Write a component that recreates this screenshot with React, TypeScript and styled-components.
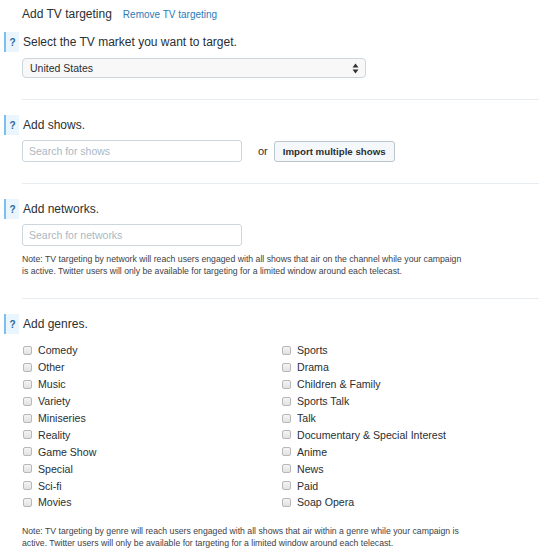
import styled, { createGlobalStyle } from "styled-components";

const GlobalStyle = createGlobalStyle`
  body {
    margin: 0;
    background: #fff;
    font-family: "Liberation Sans", Arial, sans-serif;
    color: #292f33;
  }
`;

const Page = styled.div`
  width: 548px;
  padding: 7px 0 0 0;
`;

const TitleRow = styled.div`
  display: flex;
  align-items: baseline;
  gap: 11px;
  padding-left: 22px;
  height: 17px;
`;

const Title = styled.span`
  font-size: 12px;
`;

const RemoveLink = styled.a`
  font-size: 10px;
  color: #2b7bb9;
  text-decoration: none;
  cursor: pointer;
`;

const Section = styled.section<{ $last?: boolean }>`
  margin-left: 22px;
  margin-right: 9px;
  padding: 8px 0 21px;
  border-bottom: ${(p) => (p.$last ? "none" : "1px solid #e6ecf0")};
  & + & {
    padding-top: 15px;
  }
`;

const Heading = styled.div`
  display: flex;
  align-items: center;
  height: 20px;
  margin-left: -18px;
  gap: 4px;
  font-size: 12px;
`;

const Help = styled.span`
  width: 13px;
  height: 20px;
  border-left: 2px solid #7cc0f2;
  background: #eaf5fd;
  color: #2b6a9b;
  font-size: 10px;
  font-weight: bold;
  display: flex;
  align-items: center;
  justify-content: center;
`;

const Select = styled.div`
  margin-top: 6px;
  width: 344px;
  height: 20px;
  box-sizing: border-box;
  border: 1px solid #ccd6dd;
  border-radius: 4px;
  background: #f8f8f8;
  display: flex;
  align-items: center;
  justify-content: space-between;
  padding: 0 6px 0 7px;
  font-size: 10.5px;
`;

const Row = styled.div`
  display: flex;
  align-items: center;
  margin-top: 5px;
`;

const Input = styled.input`
  width: 220px;
  height: 22px;
  box-sizing: border-box;
  border: 1px solid #ccd6dd;
  border-radius: 3px;
  padding: 0 6px;
  font-family: inherit;
  font-size: 10.5px;
  color: #292f33;
  &::placeholder {
    color: #aab8c2;
  }
`;

const Or = styled.span`
  font-size: 11px;
  margin: 0 6px 0 16px;
`;

const Button = styled.button`
  height: 21px;
  padding: 0 8px;
  border: 1px solid #bbc5cc;
  border-radius: 3px;
  background: #f5f8fa;
  font-family: inherit;
  font-size: 9.7px;
  font-weight: bold;
  color: #292f33;
`;

const Note = styled.p<{ $gap?: number }>`
  margin: ${(p) => p.$gap ?? 7}px 0 0;
  width: 442px;
  font-size: 8.7px;
  line-height: 12px;
  color: #3d4247;
`;

const Genres = styled.div`
  display: grid;
  grid-template-columns: 259px 1fr;
  grid-auto-flow: column;
  grid-template-rows: repeat(10, 16.9px);
  margin-top: 8px;
`;

const Genre = styled.label`
  display: flex;
  align-items: center;
  font-size: 10.6px;
  padding-left: 1px;
`;

const Box = styled.input.attrs({ type: "checkbox" })`
  appearance: none;
  width: 9px;
  height: 9px;
  margin: 0 6px 0 0;
  border: 1px solid #b8b8b8;
  border-radius: 2px;
  background: linear-gradient(#f4f4f4, #e2e2e2);
`;

const Arrows = () => (
  <svg width="7" height="11" viewBox="0 0 7 11">
    <path d="M3.5 0.5 L6.5 4.5 H0.5 Z" fill="#333" />
    <path d="M3.5 10.5 L6.5 6.5 H0.5 Z" fill="#333" />
  </svg>
);

const left = [
  "Comedy",
  "Other",
  "Music",
  "Variety",
  "Miniseries",
  "Reality",
  "Game Show",
  "Special",
  "Sci-fi",
  "Movies",
];
const right = [
  "Sports",
  "Drama",
  "Children & Family",
  "Sports Talk",
  "Talk",
  "Documentary & Special Interest",
  "Anime",
  "News",
  "Paid",
  "Soap Opera",
];

export default function App() {
  return (
    <Page>
      <GlobalStyle />
      <TitleRow>
        <Title>Add TV targeting</Title>
        <RemoveLink>Remove TV targeting</RemoveLink>
      </TitleRow>

      <Section>
        <Heading>
          <Help>?</Help>
          Select the TV market you want to target.
        </Heading>
        <Select>
          United States
          <Arrows />
        </Select>
      </Section>

      <Section>
        <Heading>
          <Help>?</Help>
          Add shows.
        </Heading>
        <Row>
          <Input placeholder="Search for shows" />
          <Or>or</Or>
          <Button>Import multiple shows</Button>
        </Row>
      </Section>

      <Section>
        <Heading>
          <Help>?</Help>
          Add networks.
        </Heading>
        <Row>
          <Input placeholder="Search for networks" />
        </Row>
        <Note>
          Note: TV targeting by network will reach users engaged with all shows
          that air on the channel while your campaign is active. Twitter users
          will only be available for targeting for a limited window around each
          telecast.
        </Note>
      </Section>

      <Section $last>
        <Heading>
          <Help>?</Help>
          Add genres.
        </Heading>
        <Genres>
          {[...left, ...right].map((g) => (
            <Genre key={g}>
              <Box />
              {g}
            </Genre>
          ))}
        </Genres>
        <Note $gap={14}>
          Note: TV targeting by genre will reach users engaged with all shows
          that air within a genre while your campaign is active. Twitter users
          will only be available for targeting for a limited window around each
          telecast.
        </Note>
      </Section>
    </Page>
  );
}
